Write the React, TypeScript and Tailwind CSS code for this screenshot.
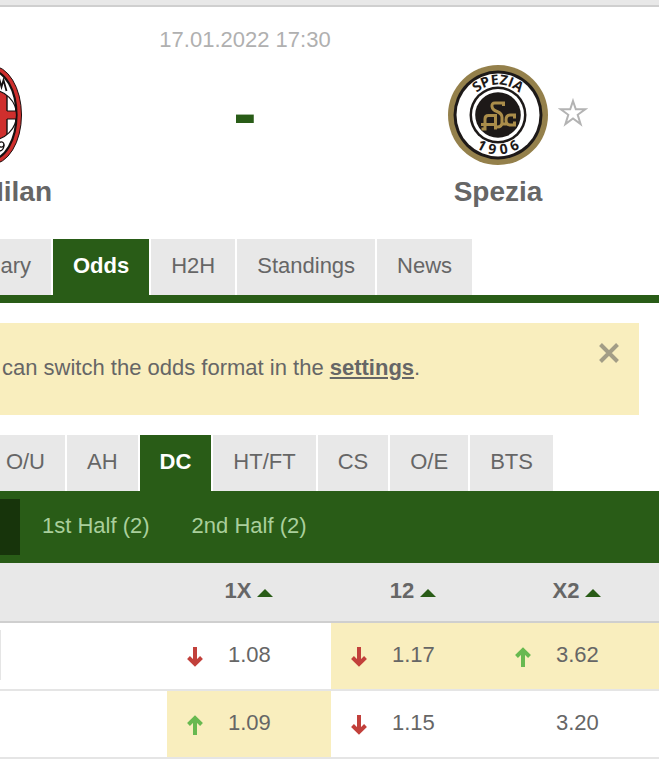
const MAIN_TABS = ["Odds", "H2H", "Standings", "News"];
const BET_TABS = ["AH", "DC", "HT/FT", "CS", "O/E", "BTS"];
const COLUMNS = ["1X", "12", "X2"];

type Odd = { value: string; trend?: "up" | "down"; best?: boolean };

const ROWS: Odd[][] = [
  [
    { value: "1.08", trend: "down" },
    { value: "1.17", trend: "down", best: true },
    { value: "3.62", trend: "up", best: true },
  ],
  [
    { value: "1.09", trend: "up", best: true },
    { value: "1.15", trend: "down" },
    { value: "3.20" },
  ],
];

function MilanCrest() {
  return (
    <svg width="22" height="100" viewBox="0 0 22 100" className="block" aria-label="Milan crest">
      <ellipse cx="-9" cy="50" rx="30.5" ry="49.5" fill="#cf2f2d" stroke="#1a0f0f" />
      <ellipse cx="-9" cy="50" rx="25.5" ry="44.5" fill="#fff" stroke="#151010" strokeWidth="2.2" />
      <clipPath id="milan-shield">
        <circle cx="-8.5" cy="50" r="25" />
      </clipPath>
      <g clipPath="url(#milan-shield)">
        <rect x="-10" y="20" width="17" height="60" fill="#cf2f2d" stroke="#151010" strokeWidth="1.4" />
        <rect x="6" y="46" width="14" height="8" fill="#cf2f2d" />
        <path d="M7 46h14M7 54h14" stroke="#151010" strokeWidth="1.2" />
      </g>
      <circle cx="-8.5" cy="50" r="25" fill="none" stroke="#151010" strokeWidth="1.2" />
      <path d="M-1 13 1.5 22 3.5 15 6.5 26" fill="none" stroke="#151010" strokeWidth="1.8" />
      <circle cx="1.3" cy="79.5" r="2.6" fill="none" stroke="#151010" strokeWidth="1.3" />
      <path d="M4 79.5c0 3.5-1.5 6-4 6.5" fill="none" stroke="#151010" strokeWidth="1.3" />
    </svg>
  );
}

function SpeziaCrest() {
  return (
    <svg width="100" height="100" viewBox="0 0 100 100" className="block" aria-label="Spezia crest">
      <circle cx="50" cy="50" r="50" fill="#94804b" />
      <circle cx="50" cy="50" r="44.5" fill="#1d1918" />
      <circle cx="50" cy="50" r="41.5" fill="#fff" />
      <circle cx="50" cy="50" r="28.5" fill="#1d1918" />
      <circle cx="50" cy="50" r="26" fill="#fff" />
      <circle cx="50" cy="50" r="22.8" fill="#1d1918" />
      <path id="spezia-top" d="M19.5 50a30.5 30.5 0 0 1 61 0" fill="none" />
      <g fill="#1d1918" fontFamily="Open Sans, sans-serif" fontWeight="700" fontSize="14" textAnchor="middle">
        <text>
          <textPath href="#spezia-top" startOffset="50%">SPEZIA</textPath>
        </text>
        <text x="50" y="89.5" transform="rotate(28 50 50)">1</text>
        <text x="50" y="89.5" transform="rotate(9.5 50 50)">9</text>
        <text x="50" y="89.5" transform="rotate(-9.5 50 50)">0</text>
        <text x="50" y="89.5" transform="rotate(-28 50 50)">6</text>
      </g>
      {/* Interlaced A S C monogram */}
      <g fill="none" stroke="#aa8d4a" strokeWidth="3">
        <path d="M37 64.5V54q0-3.5 3.500-3.500H47.500v14M33 59.500h15M33.500 64h5" />
        <path d="M55.500 41v-3H47q-3.500 0-3 3.500t5 5q5 2 5 6v5q0 4.500-5 4.500" />
        <path d="M66.500 53.500v-3.500h-4q-4.500 0-4.500 5t4.500 5h4v-3.500M53 59h6" />
      </g>
    </svg>
  );
}

function TrendArrow({ trend }: { trend: "up" | "down" }) {
  const up = trend === "up";
  return (
    <svg width="16" height="20" viewBox="0 0 16 20" fill="none" strokeWidth="4" stroke={up ? "#68b950" : "#c2403b"} aria-label={trend}>
      <path d={up ? "M8 20V4M1.5 9.5 8 3l6.5 6.5" : "M8 0v16M1.5 10.5 8 17l6.5-6.5"} />
    </svg>
  );
}

function Tab({ label, active }: { label: string; active?: boolean }) {
  return (
    <button
      className={
        active
          ? "h-14 bg-[#295c17] px-5 pb-0.5 font-bold text-white"
          : "h-14 bg-[#e8e8e8] px-5 pb-0.5"
      }
    >
      {label}
    </button>
  );
}

export default function App() {
  return (
    <div className="w-full overflow-hidden bg-white font-['Liberation_Sans',Arial,sans-serif] text-[22px] leading-7 text-[#666]">
      <div className="h-[7px] border-b-2 border-[#cfcfcf] bg-[#e8e8e8]" />

      {/* Match header */}
      <header className="flex h-[232px]">
        <div className="flex w-13 flex-col pt-[58px]">
          <MilanCrest />
          <h2 className="mt-[11px] flex justify-end text-[28px] leading-8 font-bold">Milan</h2>
        </div>
        <div className="flex flex-1 flex-col items-center pt-[19px]">
          <time className="text-[#b0b0b0]">17.01.2022 17:30</time>
          <span className="mt-[19px] text-[70px] leading-20 font-bold text-[#295c17]">-</span>
        </div>
        <div className="flex gap-2.5 pt-[58px] pr-[71px] pl-2.5">
          <div className="flex w-25 flex-col items-center">
            <SpeziaCrest />
            <h2 className="mt-[11px] text-[28px] leading-8 font-bold">Spezia</h2>
          </div>
          <button aria-label="Add to favourites" className="mt-8 h-[30px]">
            <svg width="30" height="30" viewBox="0 0 30 30" fill="none" stroke="#b3b3b3" strokeWidth="2">
              <path d="M15 4l2.8 8.3h9.4l-7.5 5.5 2.9 9.3-7.6-5.7-7.6 5.7 2.9-9.3-7.5-5.5h9.4z" />
            </svg>
          </button>
        </div>
      </header>

      <nav className="flex gap-0.5 border-b-8 border-[#295c17]">
        <button className="h-14 w-[51px] bg-[#e8e8e8] pr-5 pb-0.5 text-right">ary</button>
        {MAIN_TABS.map((t) => (
          <Tab key={t} label={t} active={t === "Odds"} />
        ))}
      </nav>

      {/* Odds format notice */}
      <div className="mt-5 mr-5 flex h-23 justify-between bg-[#f9eebe] pr-5 pl-0.5">
        <p className="pt-[31px]">
          can switch the odds format in the{" "}
          <a href="#settings" className="font-bold underline decoration-2 underline-offset-2">
            settings
          </a>
          .
        </p>
        <button aria-label="Close" className="mt-5 h-5">
          <svg width="20" height="20" viewBox="0 0 20 20" stroke="#a39d86" strokeWidth="4">
            <path d="M1.5 1.5l17 17M18.5 1.5l-17 17" />
          </svg>
        </button>
      </div>

      <nav className="mt-5 flex gap-0.5">
        <button className="h-14 w-[65px] bg-[#e8e8e8] pr-5 pb-0.5 text-right">O/U</button>
        {BET_TABS.map((t) => (
          <Tab key={t} label={t} active={t === "DC"} />
        ))}
      </nav>
      <nav className="flex h-18 items-center gap-0.5 bg-[#295c17] text-[#a9cf9c]">
        <button aria-label="Full Time" className="h-14 w-5 bg-[#17340b]" />
        <button className="h-14 px-5 pb-0.5">1st Half (2)</button>
        <button className="h-14 px-5 pb-0.5">2nd Half (2)</button>
      </nav>

      <table className="w-full table-fixed border-collapse">
        <thead>
          <tr className="h-15 bg-[#e8e8e8] shadow-[inset_0_-2px_#cfcfcf]">
            <th />
            {COLUMNS.map((c) => (
              <th key={c} className="w-[164px] p-0 pb-1">
                <button className="flex w-full items-center justify-center gap-1.5 font-bold">
                  {c}
                  <svg width="16" height="8" viewBox="0 0 16 8" className="mt-1" fill="#295c17">
                    <path d="M8 0l8 8H0z" />
                  </svg>
                </button>
              </th>
            ))}
          </tr>
        </thead>
        <tbody>
          {ROWS.map((row, i) => (
            <tr key={i} className="h-17">
              <td className="p-0 pb-1 shadow-[inset_0_-2px_#e5e5e5]">
                {i === 0 && <div className="h-[50px] w-px bg-[#e5e5e5]" />}
              </td>
              {row.map((odd) => (
                <td
                  key={odd.value}
                  className={
                    odd.best
                      ? "bg-[#f9eebe] p-0 shadow-[inset_0_-2px_#e5e5e5]"
                      : "p-0 shadow-[inset_0_-2px_#e5e5e5]"
                  }
                >
                  <div className="flex items-center gap-[25px] pb-1 pl-5">
                    <span className="w-4 pt-1">{odd.trend && <TrendArrow trend={odd.trend} />}</span>
                    {odd.value}
                  </div>
                </td>
              ))}
            </tr>
          ))}
        </tbody>
      </table>
    </div>
  );
}
